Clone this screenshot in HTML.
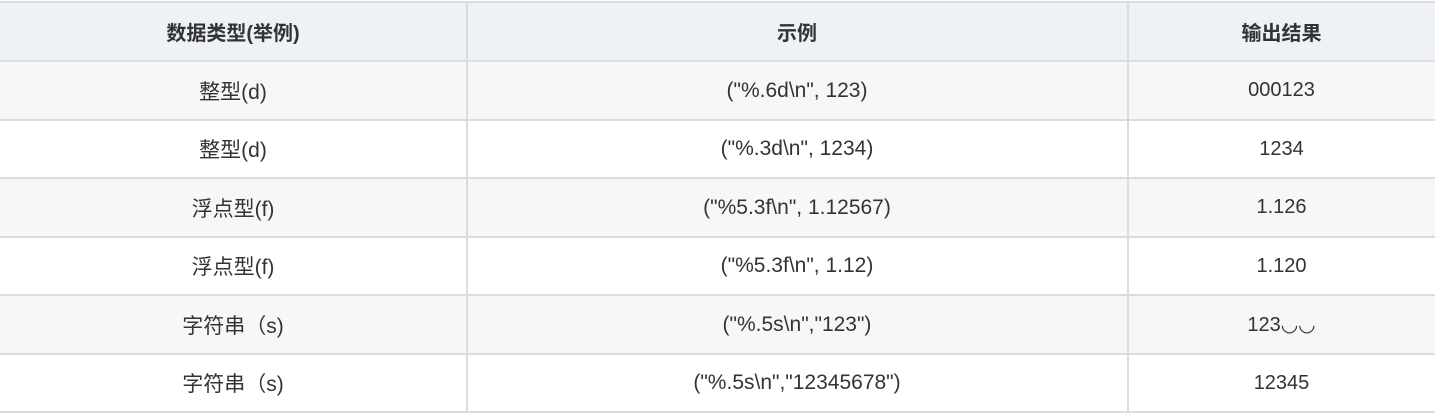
<!DOCTYPE html>
<html><head><meta charset="utf-8"><style>
*{margin:0;padding:0;box-sizing:border-box}
body{width:1435px;height:414px;background:#fff;position:relative;overflow:hidden;font-family:"Liberation Sans","Noto Sans CJK SC",sans-serif;color:#333}
.r{position:absolute;left:0;width:1435px;display:flex}
.c{display:flex;align-items:center;justify-content:center;font-size:20px;white-space:nowrap}
.c1{width:466px;font-size:21px}.c2{width:662px;font-size:21px}.c3{width:307px}
.h{background:#eef1f5;font-weight:bold}
.h .c{font-size:20px}
.l{position:absolute;left:0;width:1435px;height:2px;background:#dcdcdc}
.v{position:absolute;top:2px;width:2px;height:410px;background:#dcdcdc}
</style></head><body>
<div class="l" style="top:1px;height:2px"></div>
<div class="r h" style="top:3px;height:57px"><div class="c c1">数据类型(举例)</div><div class="c c2">示例</div><div class="c c3">输出结果</div></div>
<div class="l" style="top:60px"></div>
<div class="r" style="top:62px;height:57px;background:#f7f7f7"><div class="c c1">整型(d)</div><div class="c c2">("%.6d\n", 123)</div><div class="c c3">000123</div></div>
<div class="l" style="top:119px"></div>
<div class="r" style="top:121px;height:56px"><div class="c c1">整型(d)</div><div class="c c2">("%.3d\n", 1234)</div><div class="c c3">1234</div></div>
<div class="l" style="top:177px"></div>
<div class="r" style="top:179px;height:57px;background:#f7f7f7"><div class="c c1">浮点型(f)</div><div class="c c2">("%5.3f\n", 1.12567)</div><div class="c c3">1.126</div></div>
<div class="l" style="top:236px"></div>
<div class="r" style="top:238px;height:56px"><div class="c c1">浮点型(f)</div><div class="c c2">("%5.3f\n", 1.12)</div><div class="c c3">1.120</div></div>
<div class="l" style="top:294px"></div>
<div class="r" style="top:296px;height:57px;background:#f7f7f7"><div class="c c1">字符串（s)</div><div class="c c2">("%.5s\n","123")</div><div class="c c3">123◡◡</div></div>
<div class="l" style="top:353px"></div>
<div class="r" style="top:355px;height:56px"><div class="c c1">字符串（s)</div><div class="c c2">("%.5s\n","12345678")</div><div class="c c3">12345</div></div>
<div class="l" style="top:411px"></div>
<div class="v" style="left:466px"></div>
<div class="v" style="left:1127px"></div>
</body></html>
